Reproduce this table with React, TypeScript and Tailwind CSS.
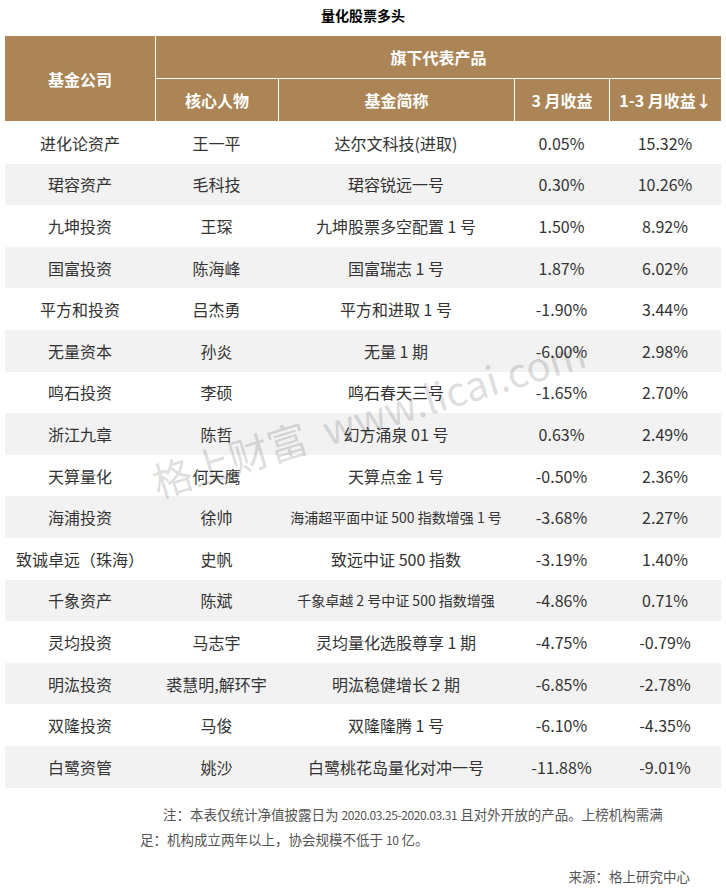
import React from "react";

type Row = [string, string, string, string, string, boolean?];

const rows: Row[] = [
  ["进化论资产", "王一平", "达尔文科技(进取)", "0.05%", "15.32%"],
  ["珺容资产", "毛科技", "珺容锐远一号", "0.30%", "10.26%"],
  ["九坤投资", "王琛", "九坤股票多空配置 1 号", "1.50%", "8.92%"],
  ["国富投资", "陈海峰", "国富瑞志 1 号", "1.87%", "6.02%"],
  ["平方和投资", "吕杰勇", "平方和进取 1 号", "-1.90%", "3.44%"],
  ["无量资本", "孙炎", "无量 1 期", "-6.00%", "2.98%"],
  ["鸣石投资", "李硕", "鸣石春天三号", "-1.65%", "2.70%"],
  ["浙江九章", "陈哲", "幻方涌泉 01 号", "0.63%", "2.49%"],
  ["天算量化", "何天鹰", "天算点金 1 号", "-0.50%", "2.36%"],
  ["海浦投资", "徐帅", "海浦超平面中证 500 指数增强 1 号", "-3.68%", "2.27%", true],
  ["致诚卓远（珠海）", "史帆", "致远中证 500 指数", "-3.19%", "1.40%"],
  ["千象资产", "陈斌", "千象卓越 2 号中证 500 指数增强", "-4.86%", "0.71%", true],
  ["灵均投资", "马志宇", "灵均量化选股尊享 1 期", "-4.75%", "-0.79%"],
  ["明汯投资", "裘慧明,解环宇", "明汯稳健增长 2 期", "-6.85%", "-2.78%"],
  ["双隆投资", "马俊", "双隆隆腾 1 号", "-6.10%", "-4.35%"],
  ["白鹭资管", "姚沙", "白鹭桃花岛量化对冲一号", "-11.88%", "-9.01%"],
];

const font = { fontFamily: '"Noto Sans CJK SC", "Noto Sans", sans-serif' };

export default function App() {
  return (
    <div className="relative w-[726px] h-[889px] bg-white overflow-hidden" style={font}>
      <div className="h-[36px] pt-[5px] text-center text-[14px] leading-[20px] font-bold text-black">
        量化股票多头
      </div>

      <div className="mx-[5px] w-[716px]">
        {/* header */}
        <div className="grid grid-cols-[150px_122px_235px_94px_111px] grid-rows-[42px_42px] gap-px bg-white text-white font-bold text-[16px]">
          <div className="row-span-2 bg-[#ab8555] flex items-center justify-center">基金公司</div>
          <div className="col-span-4 bg-[#ab8555] flex items-center justify-center">旗下代表产品</div>
          <div className="bg-[#ab8555] flex items-center justify-center">核心人物</div>
          <div className="bg-[#ab8555] flex items-center justify-center">基金简称</div>
          <div className="bg-[#ab8555] flex items-center justify-center">3 月收益</div>
          <div className="bg-[#ab8555] flex items-center justify-center">1-3 月收益↓</div>
        </div>

        {/* body */}
        <div className="pt-px">
          {rows.map((r, i) => (
            <div
              key={i}
              className={`grid grid-cols-[150px_123px_236px_95px_112px] h-[41.6px] text-[#333] text-[16px] ${
                i % 2 === 1 ? "bg-[#f2f2f2]" : "bg-white"
              }`}
            >
              <div className="flex items-center justify-center whitespace-nowrap">{r[0]}</div>
              <div className="flex items-center justify-center whitespace-nowrap">{r[1]}</div>
              <div
                className={`flex items-center justify-center whitespace-nowrap ${
                  r[5] ? "text-[14px]" : ""
                }`}
              >
                {r[2]}
              </div>
              <div className="flex items-center justify-center whitespace-nowrap">{r[3]}</div>
              <div className="flex items-center justify-center whitespace-nowrap">{r[4]}</div>
            </div>
          ))}
        </div>
      </div>

      {/* footer */}
      <div className="mt-[14px] pl-[140px] pr-[20px] text-[13.5px] leading-[25px] text-[#555]">
        <p className="indent-[23px] whitespace-nowrap">
          注：本表仅统计净值披露日为{" "}
          <span className="text-[12px] tracking-[-0.4px]">2020.03.25-2020.03.31</span>{" "}
          且对外开放的产品。上榜机构需满
        </p>
        <p className="whitespace-nowrap">
          足：机构成立两年以上，协会规模不低于 <span className="text-[12px] tracking-[-0.4px]">10</span> 亿。
        </p>
      </div>
      <div className="mt-[12px] pr-[36px] text-right text-[13.5px] leading-[25px] text-[#555]">
        来源：格上研究中心
      </div>

      {/* watermark */}
      <div className="pointer-events-none absolute left-0 right-0 top-[391px] pl-[10px] flex justify-center">
        <span className="inline-block rotate-[-17deg] whitespace-nowrap text-[40px] leading-[50px] text-black/15">
          格上财富&nbsp;&nbsp;www.licai.com
        </span>
      </div>
    </div>
  );
}
